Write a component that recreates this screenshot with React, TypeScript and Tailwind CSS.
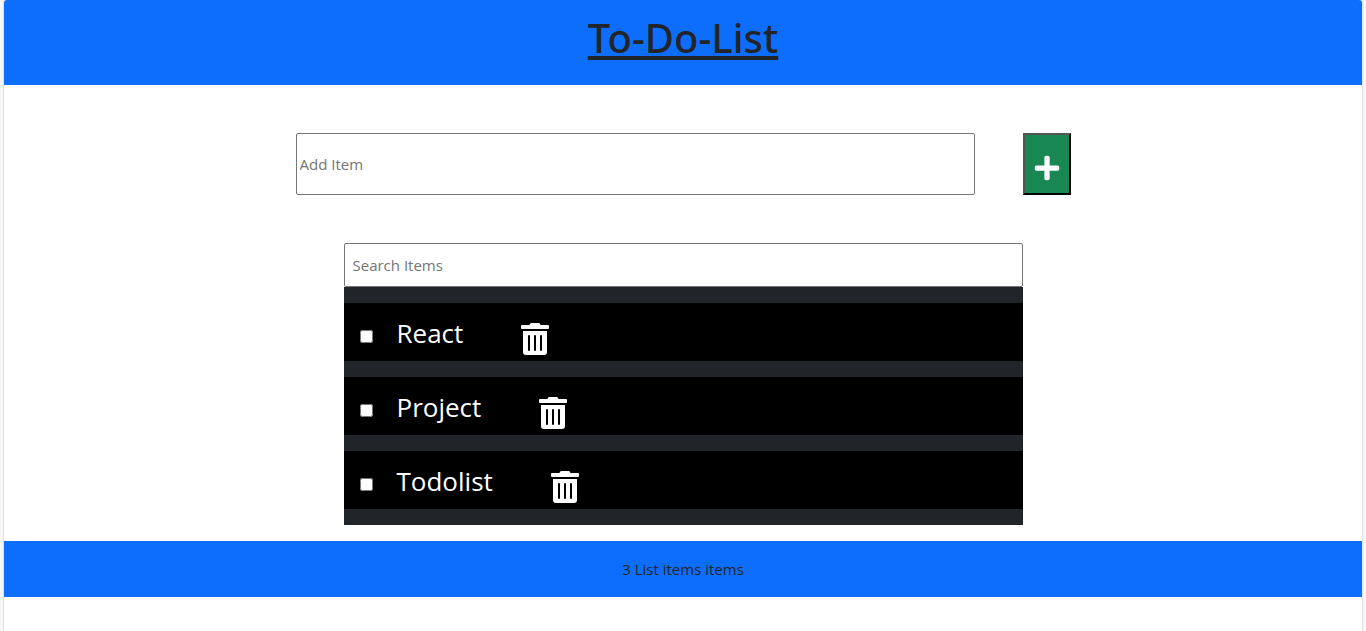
import { useState } from "react";
import { FaPlus, FaTrashAlt } from "react-icons/fa";

type Item = { id: number; name: string; done: boolean };

const initialItems: Item[] = [
  { id: 1, name: "React", done: false },
  { id: 2, name: "Project", done: false },
  { id: 3, name: "Todolist", done: false },
];

function Header() {
  return (
    <header className="rounded-t-[3px] bg-[#0d6efd] pt-3.5 pb-[23px] text-center">
      <h1 className="font-['Noto_Sans','Open_Sans',sans-serif] text-[40px] leading-[48px] font-medium underline decoration-4 underline-offset-3">
        To-Do-List
      </h1>
    </header>
  );
}

function AddItem({ onAdd }: { onAdd: (name: string) => void }) {
  const [name, setName] = useState("");
  return (
    <form
      className="flex justify-center gap-12 py-12"
      onSubmit={(e) => {
        e.preventDefault();
        if (name.trim()) onAdd(name.trim());
        setName("");
      }}
    >
      <input
        type="text"
        aria-label="Add Item"
        placeholder="Add Item"
        value={name}
        onChange={(e) => setName(e.target.value)}
        className="h-[62px] w-1/2 rounded-xs border border-[#767676] bg-white px-[3px] text-[15px] placeholder:text-[#757575]"
      />
      <button
        type="submit"
        aria-label="Add"
        className="flex w-12 items-center justify-center border-2 border-t-[#555] border-r-black border-b-black border-l-[#555] bg-[#198754] pt-2 text-white"
      >
        <FaPlus size={28} />
      </button>
    </form>
  );
}

function ItemRow({ item, onCheck, onDelete }: { item: Item; onCheck: () => void; onDelete: () => void }) {
  const id = `item-${item.id}`;
  return (
    <li className="flex h-[58px] items-center bg-black px-4 text-white">
      <input id={id} type="checkbox" checked={item.done} onChange={onCheck} className="mt-2 size-[13px]" />
      <label htmlFor={id} className="ml-6 pt-0.5 text-[26px] leading-8">
        {item.name}
      </label>
      <button type="button" aria-label={`Delete ${item.name}`} onClick={onDelete} className="ml-14 pt-3.5">
        <FaTrashAlt size={32} />
      </button>
    </li>
  );
}

export default function App() {
  const [items, setItems] = useState(initialItems);
  const [search, setSearch] = useState("");
  const shown = items.filter((i) => i.name.toLowerCase().includes(search.toLowerCase()));

  return (
    <div className="min-h-screen bg-[#f7f7f7] px-1 font-['Open_Sans','Noto_Sans',sans-serif] text-[#212529]">
      <div className="min-h-screen rounded-t-[3px] bg-white shadow-[0_0_1px_1px_#dfdfdf]">
        <Header />
        <main>
          <AddItem onAdd={(name) => setItems([...items, { id: Date.now(), name, done: false }])} />
          <section className="mx-auto mb-4 w-1/2">
            <input
              type="text"
              aria-label="Search Items"
              placeholder="Search Items"
              value={search}
              onChange={(e) => setSearch(e.target.value)}
              className="block h-11 w-full rounded-xs border border-[#767676] bg-white px-2 text-[15px] placeholder:text-[#757575]"
            />
            <ul className="flex flex-col gap-4 bg-[#212529] py-4">
              {shown.map((item) => (
                <ItemRow
                  key={item.id}
                  item={item}
                  onCheck={() => setItems(items.map((i) => (i.id === item.id ? { ...i, done: !i.done } : i)))}
                  onDelete={() => setItems(items.filter((i) => i.id !== item.id))}
                />
              ))}
            </ul>
          </section>
        </main>
        <footer className="bg-[#0d6efd] p-4 text-center text-[15px] leading-6">{items.length} List items items</footer>
      </div>
    </div>
  );
}
